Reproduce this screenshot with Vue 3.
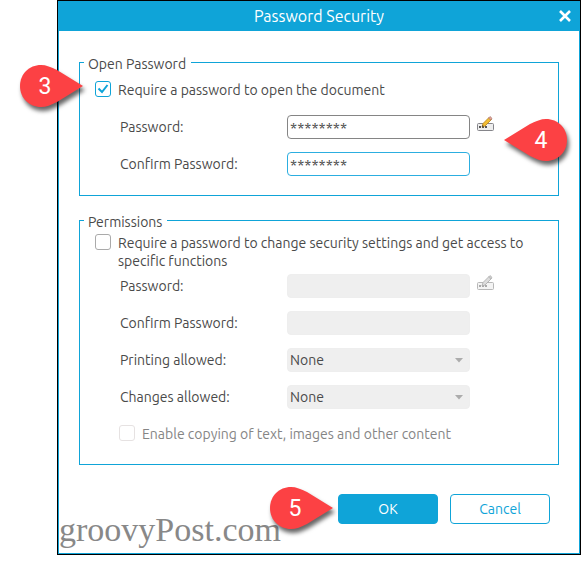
<template>
  <div class="page">
    <form class="dialog" @submit.prevent>
      <header class="titlebar">
        <h1>Password Security</h1>
        <button type="button" class="close" aria-label="Close">
          <svg width="14" height="14" viewBox="0 0 14 14">
            <path d="M2 2l10 10M12 2L2 12" stroke="#fff" stroke-width="2.600" />
          </svg>
        </button>
      </header>

      <div class="content">
        <fieldset>
          <legend>Open Password</legend>
          <div class="check-row">
            <input id="require-open" v-model="requireOpen" type="checkbox" />
            <label for="require-open">Require a password to open the document</label>
            <svg class="marker marker-3" width="80" height="60" viewBox="0 0 80 60">
              <path class="pin" d="M26 5C14 5 5 14 5 26s9 21 21 21c5 0 10-2 16-5L68 26L42 10C36 7 31 5 26 5z" />
              <text x="30" y="34" text-anchor="middle">3</text>
            </svg>
          </div>
          <div class="fields">
            <div class="row">
              <label for="open-pw">Password:</label>
              <input id="open-pw" v-model="openPassword" type="text" />
              <button type="button" class="edit" aria-label="Edit password">
                <svg width="18" height="16" viewBox="0 0 18 16">
                  <rect x="0.5" y="7.5" width="16" height="7" rx="1" fill="#eee" stroke="#85858a" />
                  <path d="M2 10h2v2H2zM5 10h2v2H5zM8 10h2v2H8z" fill="#555" />
                  <path d="M5 11l1-3.500L12 1.500l2.500 2L8 10z" fill="#f2bd32" stroke="#b57f1c" stroke-width="0.800" />
                  <path d="M11.500 2l1.500-1.500 2 1.800L13.800 4z" fill="#e8a59a" stroke="#9a6a62" stroke-width="0.600" />
                  <path d="M5 11l0.500-2 1.400 1.200z" fill="#333" />
                </svg>
              </button>
              <svg class="marker marker-4" width="80" height="60" viewBox="0 0 80 60">
                <path class="pin" d="M47 5c12 0 21 9 21 21s-9 21-21 21c-5 0-10-2-16-5L5 26L31 10C37 7 42 5 47 5z" />
                <text x="42" y="34" text-anchor="middle">4</text>
              </svg>
            </div>
            <div class="row">
              <label for="open-confirm">Confirm Password:</label>
              <input id="open-confirm" v-model="openConfirm" class="focused" type="text" />
            </div>
          </div>
        </fieldset>

        <fieldset class="permissions">
          <legend>Permissions</legend>
          <div class="check-row">
            <input id="require-change" v-model="requireChange" type="checkbox" />
            <label for="require-change">Require a password to change security settings and get access to specific functions</label>
          </div>
          <div class="fields">
            <div class="row">
              <label for="perm-pw">Password:</label>
              <input id="perm-pw" type="text" disabled />
              <button type="button" class="edit" aria-label="Edit permissions password" disabled>
                <svg width="18" height="16" viewBox="0 0 18 16">
                  <rect x="0.5" y="7.5" width="16" height="7" rx="1" fill="#f4f4f4" stroke="#b8b8b8" />
                  <path d="M2 10h2v2H2zM5 10h2v2H5zM8 10h2v2H8z" fill="#aaa" />
                  <path d="M5 11l1-3.500L12 1.500l2.500 2L8 10z" fill="#ddd" stroke="#aaa" stroke-width="0.800" />
                  <path d="M11.500 2l1.500-1.500 2 1.800L13.800 4z" fill="#ccc" stroke="#aaa" stroke-width="0.600" />
                </svg>
              </button>
            </div>
            <div class="row">
              <label for="perm-confirm">Confirm Password:</label>
              <input id="perm-confirm" type="text" disabled />
            </div>
            <div v-for="item in allowances" :key="item.id" class="row">
              <label :for="item.id">{{ item.label }}</label>
              <div class="select-wrap">
                <select :id="item.id" disabled>
                  <option>None</option>
                </select>
                <svg class="arrow" width="8" height="5" viewBox="0 0 8 5"><path d="M0 0h8L4 4.500z" fill="#acacac" /></svg>
              </div>
            </div>
          </div>
          <div class="check-row copy-check">
            <input id="enable-copy" type="checkbox" disabled />
            <label for="enable-copy">Enable copying of text, images and other content</label>
          </div>
        </fieldset>
      </div>

      <footer class="actions">
        <span class="watermark">groovyPost.com</span>
        <button type="submit" class="btn primary">OK</button>
        <button type="button" class="btn">Cancel</button>
        <svg class="marker marker-5" width="80" height="60" viewBox="0 0 80 60">
          <path class="pin" d="M26 5C14 5 5 14 5 26s9 21 21 21c5 0 10-2 16-5L68 26L42 10C36 7 31 5 26 5z" />
          <text x="30" y="34" text-anchor="middle">5</text>
        </svg>
      </footer>
    </form>
  </div>
</template>

<script setup>
import { ref } from 'vue'

const requireOpen = ref(true)
const requireChange = ref(false)
const openPassword = ref('********')
const openConfirm = ref('********')

const allowances = [
  { id: 'printing', label: 'Printing allowed:' },
  { id: 'changes', label: 'Changes allowed:' },
]
</script>

<style>
body {
  background: #fff;
}
</style>

<style scoped>
.page {
  padding-left: 57px;
  font-family: Ubuntu, 'Noto Sans', sans-serif;
  font-size: 14px;
  line-height: 18px;
  color: #4a4a4a;
}

.dialog {
  border: 1px solid #000;
  background: #fff;
  box-shadow: inset 0 0 0 1px #0fa4d8;
}

.titlebar {
  position: relative;
  display: flex;
  align-items: center;
  justify-content: center;
  height: 30px;
  background: #0fa4d8;
  color: #fff;
}
.titlebar h1 {
  margin: 0;
  font-size: 16px;
  font-weight: normal;
}
.close {
  position: absolute;
  right: 8px;
  top: 8px;
  display: flex;
  padding: 0;
  border: 0;
  background: none;
}

.content {
  display: flex;
  flex-direction: column;
  gap: 14px;
  padding: 21px 21px 0;
}

fieldset {
  min-width: 0;
  margin: 0;
  padding: 8px 15px 19px;
  border: 1px solid #0fa4d8;
}
legend {
  margin-left: -11px;
  padding: 3px 5px 0 4px;
}
.permissions {
  padding-top: 3px;
}

/* Checkboxes */
.check-row {
  position: relative;
  display: flex;
  align-items: flex-start;
  gap: 7px;
}
.check-row input {
  flex-shrink: 0;
  appearance: none;
  width: 16px;
  height: 16px;
  margin: 0;
  border: 1px solid #aaa;
  border-radius: 3px;
  background: #fff;
}
.check-row input:checked {
  border-color: #0fa4d8;
  background: url("data:image/svg+xml,%3Csvg xmlns='http://www.w3.org/2000/svg' viewBox='0 0 14 14'%3E%3Cpath d='M2.5 6.5l3.500 3.500 5.500-7' fill='none' stroke='%230fa4d8' stroke-width='2'/%3E%3C/svg%3E");
}
.check-row input:disabled {
  border-color: #e6e2e2;
}
.copy-check {
  padding: 16px 0 2px 24px;
  color: #858585;
}

/* Labelled fields */
.fields {
  display: flex;
  flex-direction: column;
  gap: 13px;
  padding: 16px 0 0 25px;
}
.permissions .fields {
  padding-top: 4px;
}
.row {
  position: relative;
  display: grid;
  grid-template-columns: 160px minmax(0, 183px) auto;
  column-gap: 7px;
  align-items: center;
  justify-content: start;
}
.row input,
.row select {
  box-sizing: border-box;
  width: 100%;
  height: 24px;
  padding: 0 2px;
  border: 1px solid #858585;
  border-radius: 4px;
  outline: 0;
  background: #fff;
  font: inherit;
  color: #4a4a4a;
}
.row input {
  font-size: 15px;
}
.row input.focused {
  border-color: #2caee0;
}
.row input:disabled,
.row select:disabled {
  border-color: #eee;
  background: #efefef;
  opacity: 1;
}
.row select {
  display: block;
  appearance: none;
}
.select-wrap {
  position: relative;
}
.arrow {
  position: absolute;
  right: 7px;
  top: 10px;
}
.edit {
  display: flex;
  align-self: start;
  padding: 1px 0 0;
  border: 0;
  background: none;
}

/* Footer */
.actions {
  position: relative;
  display: flex;
  justify-content: flex-end;
  gap: 12px;
  padding: 29px 30px 30px;
}
.btn {
  width: 100px;
  height: 30px;
  padding: 0;
  border: 1px solid #0fa4d8;
  border-radius: 4px;
  background: #fff;
  font: inherit;
  color: #0fa4d8;
}
.btn.primary {
  background: #0fa4d8;
  color: #fff;
}
.watermark {
  position: absolute;
  left: 1px;
  bottom: 7px;
  font-family: 'Liberation Serif', serif;
  font-size: 34px;
  line-height: 34px;
  color: #888;
}

/* Step markers */
.marker {
  position: absolute;
  overflow: visible;
  pointer-events: none;
  font-family: Roboto, sans-serif;
  font-size: 23px;
}
.marker .pin {
  fill: #fc4144;
  filter: drop-shadow(2px 4px 2px rgba(0, 0, 0, 0.6));
}
.marker text {
  fill: #fff;
}
.marker-3 {
  left: -80px;
  top: -21px;
}
.marker-4 {
  left: 379px;
  top: -1px;
}
.marker-5 {
  right: 235px;
  top: 17px;
}
</style>
